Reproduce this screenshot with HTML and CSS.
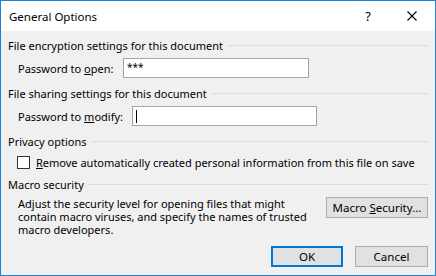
FILE: index.html
```html
<!DOCTYPE html>
<html lang="en">
<head>
  <meta charset="UTF-8">
  <title>General Options</title>
  <link rel="stylesheet" href="styles.css">
</head>
<body>
  <div class="window">
    <div class="titlebar">
      <span class="title">General Options</span>
      <span class="help">?</span>
      <svg class="close" width="10" height="10" viewBox="0 0 10 10">
        <path d="M0.5 0.5 L9.5 9.5 M9.5 0.5 L0.5 9.5" stroke="#000" stroke-width="1.1" fill="none"/>
      </svg>
    </div>

    <div class="content">
      <div class="group-head g1"><span>File encryption settings for this document</span><i class="rule"></i></div>
      <div class="field-row r1">
        <label class="lbl-open">Password to <u>o</u>pen:</label>
        <div class="textbox tb-open">***</div>
      </div>

      <div class="group-head g2"><span>File sharing settings for this document</span><i class="rule"></i></div>
      <div class="field-row r2">
        <label class="lbl-modify">Password to <u>m</u>odify:</label>
        <div class="textbox tb-modify"><i class="caret"></i></div>
      </div>

      <div class="group-head g3"><span>Privacy options</span><i class="rule"></i></div>
      <div class="check-row">
        <span class="checkbox"></span>
        <span><u>R</u>emove automatically created personal information from this file on save</span>
      </div>

      <div class="group-head g4"><span>Macro security</span><i class="rule"></i></div>
      <div class="macro-row">
        <p class="macro-text">Adjust the security level for opening files that might contain macro viruses, and specify the names of trusted macro developers.</p>
        <button class="btn btn-macro">Macro <u>S</u>ecurity...</button>
      </div>

      <div class="actions">
        <button class="btn btn-ok">OK</button>
        <button class="btn">Cancel</button>
      </div>
    </div>
  </div>
</body>
</html>
```

FILE: styles.css
```css
body {
  margin: 0;
  padding: 0;
  font-family: "Noto Sans", "Open Sans", Arial, sans-serif;
  font-size: 11px;
  color: #000;
}
.window {
  width: 436px;
  height: 276px;
  box-sizing: border-box;
  border: 1px solid #1883d7;
  background-color: #f0f0f0;
  display: flex;
  flex-direction: column;
}
.titlebar {
  height: 30px;
  background-color: #fff;
  display: flex;
  align-items: center;
}
.title {
  margin-left: 8px;
  flex: 1;
  font-size: 11.5px;
}
.help {
  font-size: 13px;
  margin-right: 36px;
}
.close {
  margin-right: 18px;
}
.content {
  padding: 0 7px;
  flex: 1;
  display: flex;
  flex-direction: column;
}
.group-head {
  height: 16px;
  display: flex;
  align-items: center;
  white-space: nowrap;
}
.group-head .rule {
  flex: 1;
  height: 1px;
  background-color: #dcdcdc;
  margin-left: 4px;
}
.g1 { margin-top: 6px; }
.g2, .g3, .g4 { margin-top: 7px; }
.field-row {
  height: 20px;
  display: flex;
  align-items: center;
  margin-left: 10px;
  white-space: nowrap;
}
.r1, .r2 { margin-top: 5px; }
.field-row label {
  width: 105px;
  flex-shrink: 0;
}
.lbl-modify {
  width: 114px !important;
}
.textbox {
  height: 20px;
  box-sizing: border-box;
  border: 1px solid #a6a6a6;
  background-color: #fff;
  padding: 2px 3px;
  line-height: 12px;
  font-size: 10px;
  flex-shrink: 0;
}
.tb-open {
  width: 186px;
}
.tb-modify {
  width: 185px;
  display: flex;
  align-items: center;
}
.caret {
  width: 1px;
  height: 13px;
  background-color: #000;
}
.check-row {
  margin-top: 6px;
  margin-left: 9px;
  height: 14px;
  display: flex;
  align-items: center;
  white-space: nowrap;
}
.checkbox {
  width: 13px;
  height: 13px;
  box-sizing: border-box;
  border: 1px solid #333;
  background-color: #fff;
  margin-right: 6px;
  flex-shrink: 0;
}
.macro-row {
  margin-top: 5px;
  display: flex;
  justify-content: space-between;
  align-items: flex-start;
}
.macro-text {
  margin: 0 0 0 10px;
  width: 300px;
  line-height: 13px;
}
.btn {
  font-family: inherit;
  font-size: 11.5px;
  color: #000;
  background-color: #e1e1e1;
  border: 1px solid #adadad;
  height: 21px;
  width: 73px;
  padding: 0;
  flex-shrink: 0;
}
.btn-macro {
  width: 102px;
}
.actions {
  margin-top: auto;
  margin-bottom: 8px;
  display: flex;
  justify-content: flex-end;
  gap: 12px;
}
.btn-ok {
  border: 2px solid #0078d7;
  width: 72px;
}
```
